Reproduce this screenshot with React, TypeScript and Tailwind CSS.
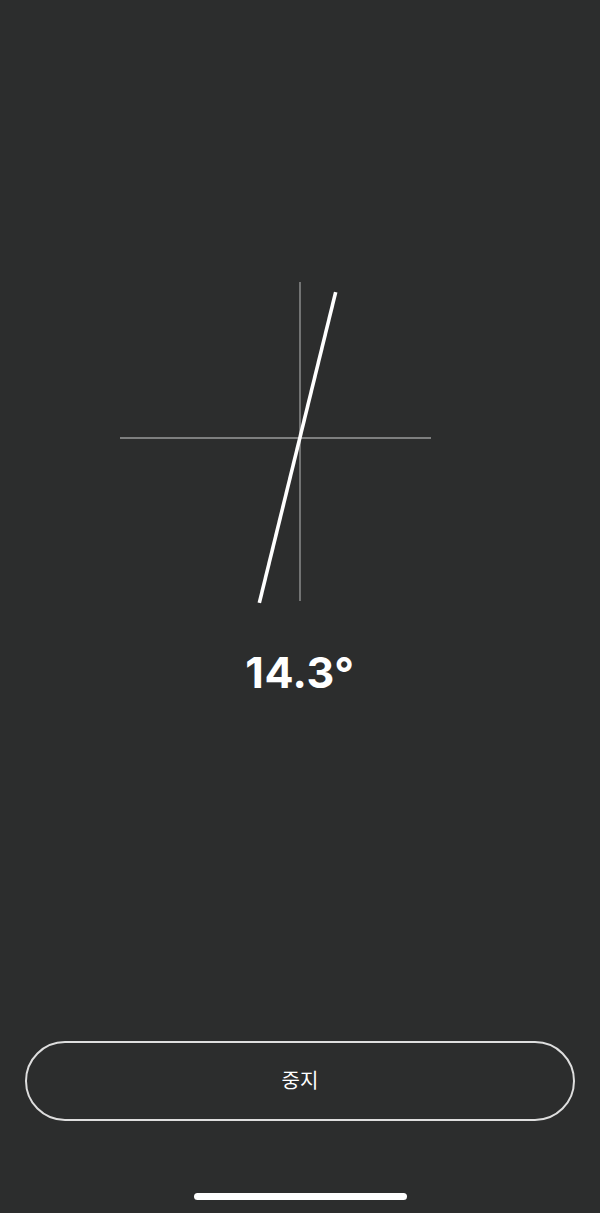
import React from 'react';

const Crosshair: React.FC<{ angle: number }> = ({ angle }) => {
  // grey cross at (180,157); the needle is centred a little below it
  const cx = 180;
  const cy = 157;
  const half = 160;
  const rad = (angle * Math.PI) / 180;
  const dx = Math.sin(rad) * half;
  const dy = Math.cos(rad) * half;
  const nx = 177.5;
  const ny = 166.5;
  return (
    <svg width="360" height="326" viewBox="0 0 360 326" className="block">
      <line x1={cx} y1="1" x2={cx} y2="320" stroke="#9a9b9b" strokeWidth="1.3" />
      <line x1="0" y1={cy} x2="311" y2={cy} stroke="#9a9b9b" strokeWidth="1.3" />
      <line
        x1={nx + dx}
        y1={ny - dy}
        x2={nx - dx}
        y2={ny + dy}
        stroke="#ffffff"
        strokeWidth="3.6"
      />
    </svg>
  );
};

export default function App() {
  return (
    <div
      className="h-[1213px] w-full bg-[#2c2d2d] flex flex-col items-center overflow-hidden"
      style={{ fontFamily: '"Inter", "Noto Sans CJK KR", sans-serif' }}
    >
      <div className="pt-[281px]">
        <Crosshair angle={13.8} />
      </div>

      <div className="mt-[44px] text-white text-[43px] font-bold leading-none tracking-[0.5px]">
        14.3°
      </div>

      <div className="flex-1" />

      <button className="w-[550px] h-[80px] rounded-[40px] border-2 border-[#dedede] text-white text-[20px] flex items-center justify-center">
        중지
      </button>

      <div className="mt-[72px] mb-[13px] w-[213px] h-[7px] rounded-full bg-white" />
    </div>
  );
}
